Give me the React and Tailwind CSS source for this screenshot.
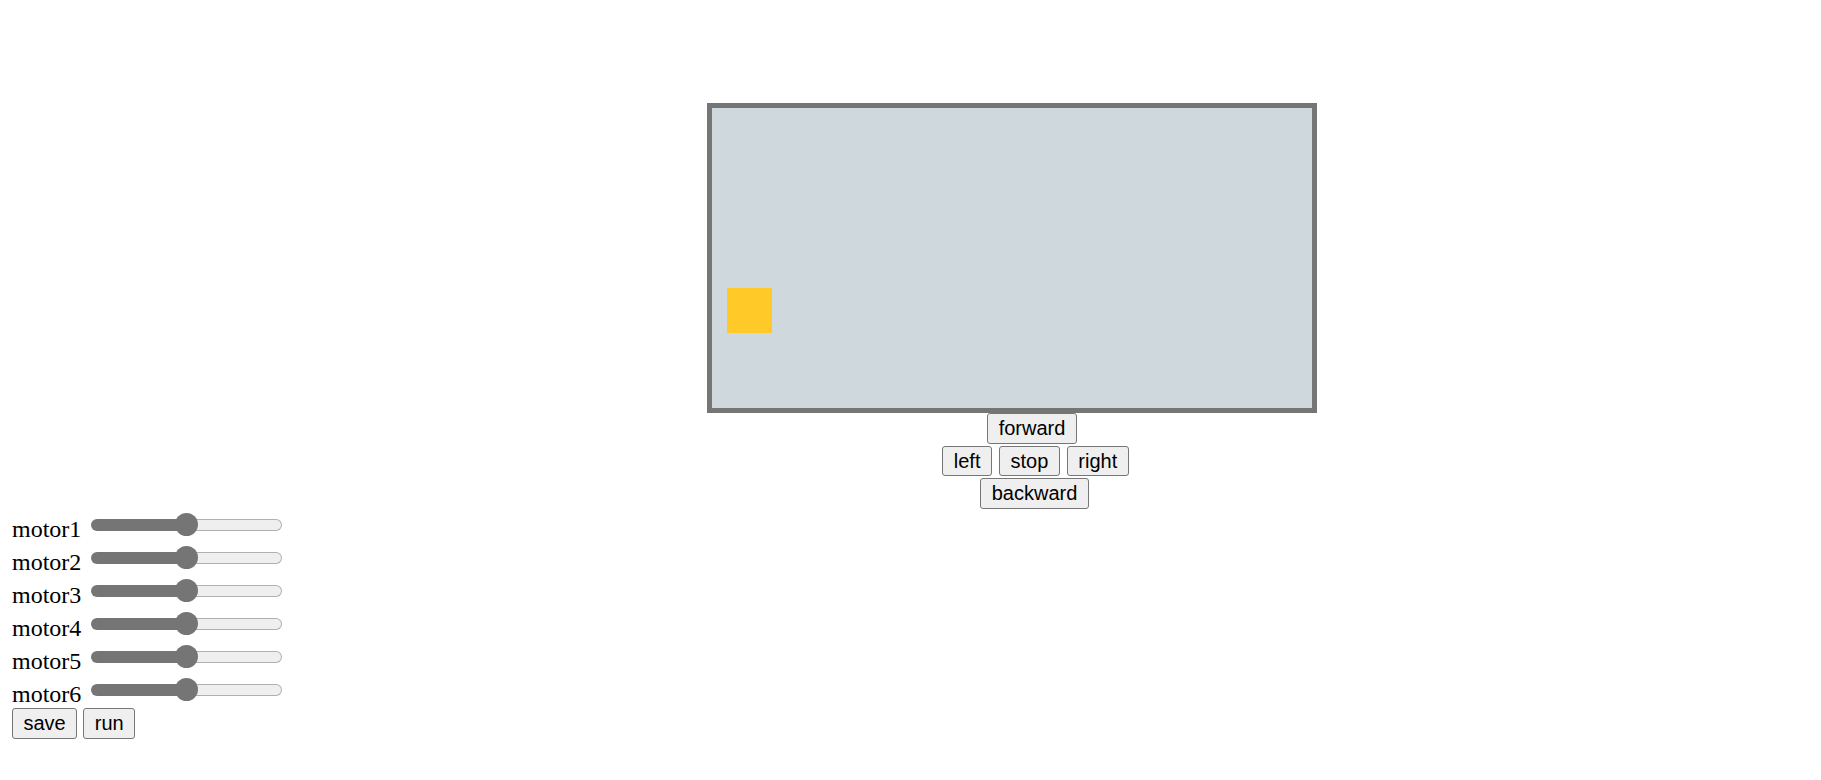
import React from "react";

const base =
  "px-[10.5px] bg-[#efefef] border border-[#767676] rounded-[3px] text-[20px] leading-none text-black [font-family:'Liberation_Sans',Arial,sans-serif] flex items-center justify-center";
const btn = "h-[30.5px] " + base;
const btn2 = "h-[31.5px] " + base;

function Slider() {
  return (
    <div className="relative ml-[9.7px] mt-[4px] h-[24px] w-[191px] flex items-center">
      <div className="h-[12px] w-[96px] bg-[#757575] rounded-l-full" />
      <div className="h-[12px] flex-1 bg-[#efefef] border border-[#b0b0b0] border-l-0 rounded-r-full" />
      <div className="absolute left-[84px] top-[0px] h-[23px] w-[23px] rounded-full bg-[#757575]" />
    </div>
  );
}

export default function App() {
  const motors = ["motor1", "motor2", "motor3", "motor4", "motor5", "motor6"];
  return (
    <div className="w-[1821px] h-[780px] bg-white pt-[103px] overflow-hidden">
      <div className="ml-[707px] w-[610px] h-[310px] border-[5px] border-[#757575] bg-[#cfd8dc] flex flex-col">
        <div className="h-[180px]" />
        <div className="ml-[15px] w-[45px] h-[45px] bg-[#ffca28]" />
      </div>
      <div className="ml-[707px] w-[655px] flex flex-col items-center gap-[2px]">
        <div className="flex mr-[5px]">
          <button className={btn}>forward</button>
        </div>
        <div className="flex gap-[7px] ml-[2px]">
          <button className={btn}>left</button>
          <button className={btn}>stop</button>
          <button className={btn}>right</button>
        </div>
        <div className="flex">
          <button className={btn}>backward</button>
        </div>
      </div>
      <div className="pl-[12px] flex flex-col">
        {motors.map((m) => (
          <div key={m} className="h-[33px] flex items-start">
            <span className="mt-[8px] text-[24px] leading-[25px] text-black [font-family:'Liberation_Serif','Times_New_Roman',serif]">
              {m}
            </span>
            <Slider />
          </div>
        ))}
        <div className="flex gap-[6px] mt-[1px]">
          <button className={btn2}>save</button>
          <button className={btn2}>run</button>
        </div>
      </div>
    </div>
  );
}
